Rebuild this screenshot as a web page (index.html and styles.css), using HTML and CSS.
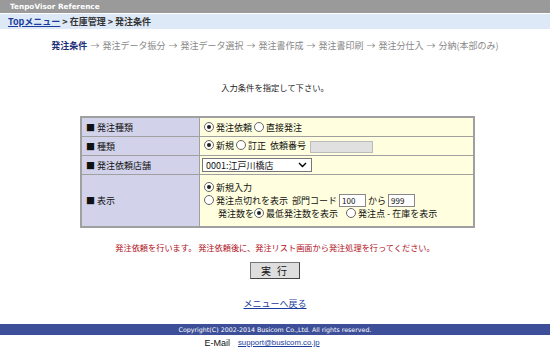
FILE: index.html
```html
<!DOCTYPE html>
<html lang="ja">
<head>
<meta charset="utf-8">
<title>発注条件</title>
<link rel="stylesheet" href="styles.css">
</head>
<body>
<div class="topbar">TenpoVisor Reference</div>
<div class="crumbs"><a href="#">Topメニュー</a> &gt; 在庫管理 &gt; 発注条件</div>
<div class="steps"><b>発注条件</b> → 発注データ振分 → 発注データ選択 → 発注書作成 → 発注書印刷 → 発注分仕入 → 分納(本部のみ)</div>
<p class="intro">入力条件を指定して下さい。</p>
<table class="form">
  <tr>
    <th>■ 発注種類</th>
    <td><span class="radio on"></span>発注依頼 <span class="radio"></span>直接発注</td>
  </tr>
  <tr>
    <th>■ 種類</th>
    <td><span class="radio on"></span>新規 <span class="radio"></span>訂正 &nbsp;依頼番号 <span class="box gray"></span></td>
  </tr>
  <tr>
    <th>■ 発注依頼店舗</th>
    <td><span class="select">0001:江戸川橋店<svg width="9" height="6" viewBox="0 0 9 6"><path d="M1 1 L4.5 4.5 L8 1" fill="none" stroke="#000" stroke-width="1.4"/></svg></span></td>
  </tr>
  <tr class="tall">
    <th>■ 表示</th>
    <td>
      <div class="line"><span class="radio on"></span>新規入力</div>
      <div class="line"><span class="radio"></span>発注点切れを表示 &nbsp;部門コード <span class="box small">100</span>から <span class="box small">999</span></div>
      <div class="line indent">発注数を <span class="radio on"></span>最低発注数を表示 &nbsp;&nbsp;&nbsp;<span class="radio"></span>発注点 - 在庫を表示</div>
    </td>
  </tr>
</table>
<p class="notice">発注依頼を行います。 発注依頼後に、発注リスト画面から発注処理を行ってください。</p>
<div class="btnrow"><button class="btn">実 行</button></div>
<div class="back"><a href="#">メニューへ戻る</a></div>
<div class="footer">Copyright(C) 2002-2014 Busicom Co.,Ltd. All rights reserved.</div>
<div class="mail"><span class="mlabel">E-Mail</span><a href="#">support@busicom.co.jp</a></div>
</body>
</html>
```
FILE: styles.css
```css
body {
  margin: 0;
  background: #fff;
  font-family: "Noto Sans CJK JP", "Noto Sans", sans-serif;
  font-size: 9px;
  color: #222;
}
a { color: #1a3c9c; }
.topbar {
  height: 13px;
  line-height: 13px;
  background: #9a9a9a;
  color: #fff;
  font-family: "DejaVu Sans", sans-serif;
  font-weight: bold;
  font-size: 7.3px;
  padding-left: 10px;
}
.crumbs {
  margin-top: 1px;
  height: 15px;
  line-height: 15px;
  background: #dde9f6;
  padding-left: 8px;
  font-size: 9px;
  font-weight: bold;
  color: #333;
}
.crumbs a { color: #1a3c9c; }
.steps {
  margin-top: 10px;
  text-align: center;
  color: #888;
  font-size: 9px;
  line-height: 14px;
  word-spacing: 1px;
}
.steps b { color: #1f2f7a; }
.intro {
  margin: 27px 0 0;
  text-align: center;
  line-height: 14px;
  font-size: 8.3px;
  color: #222;
}
.form {
  margin: 22px 0 0 80px;
  width: 395px;
  border-collapse: collapse;
  border: 2px solid #a0a0a0;
}
.form th, .form td {
  border: 1px solid #a0a0a0;
  height: 18px;
  padding: 0 4px;
  text-align: left;
  font-weight: normal;
  vertical-align: middle;
  white-space: nowrap;
}
.form th {
  width: 109px;
  background: #d2d3ea;
  color: #111;
}
.form td {
  background: #ffffdf;
  padding-left: 4px;
  color: #111;
}
.form .tall td { height: 48px; padding-top: 1px; padding-bottom: 2px; }
.line { height: 13px; line-height: 13px; display: flex; align-items: center; }
.indent { padding-left: 14px; }
.radio {
  display: inline-block;
  box-sizing: border-box;
  width: 10px;
  height: 10px;
  border: 1px solid #666;
  border-radius: 50%;
  background: #fff;
  vertical-align: -1px;
  margin-right: 2px;
  position: relative;
}
.line .radio { flex: none; }
.radio.on::after {
  content: "";
  position: absolute;
  left: 2px;
  top: 2px;
  width: 4px;
  height: 4px;
  border-radius: 50%;
  background: #222;
}
.box {
  display: inline-block;
  box-sizing: border-box;
  border: 1px solid #888;
  background: #fff;
  height: 13px;
  line-height: 11px;
  vertical-align: middle;
  font-size: 8px;
  padding-left: 2px;
}
.line .box { margin: 0 2px; }
.box.gray { width: 63px; background: #e0e0e0; border-color: #bbb; height: 12px; margin-left: 2px; }
.box.small { width: 27px; }
.select {
  display: inline-flex;
  align-items: center;
  justify-content: space-between;
  box-sizing: border-box;
  width: 110px;
  height: 14px;
  border: 1px solid #777;
  background: #fff;
  padding: 0 4px 0 3px;
  margin-left: -2px;
  font-size: 9px;
}
.notice {
  margin: 12px 0 0;
  text-align: center;
  color: #b0101a;
  font-size: 8.2px;
  line-height: 14px;
}
.btnrow {
  margin-top: 8px;
  text-align: center;
}
.btn {
  width: 50px;
  height: 17px;
  padding: 0;
  background: #dedede;
  border: 1px solid #777;
  border-right-color: #444;
  border-bottom-color: #444;
  font-family: "Noto Sans CJK JP", sans-serif;
  font-size: 10px;
  color: #111;
  letter-spacing: 2px;
}
.back {
  margin-top: 18px;
  text-align: center;
  line-height: 14px;
}
.back a { color: #1a3c9c; }
.footer {
  margin-top: 13px;
  height: 11px;
  line-height: 11px;
  background: #3d4f98;
  color: #fff;
  text-align: center;
  font-family: "DejaVu Sans", sans-serif;
  font-size: 6.3px;
}
.mail {
  margin-top: 1px;
  display: flex;
  justify-content: center;
  align-items: center;
  gap: 8px;
  line-height: 14px;
  font-family: "Liberation Sans", sans-serif;
  color: #111;
  padding-right: 26px;
}
.mlabel { font-size: 9px; }
.mail a { color: #1a3c9c; font-size: 7.8px; }
```
